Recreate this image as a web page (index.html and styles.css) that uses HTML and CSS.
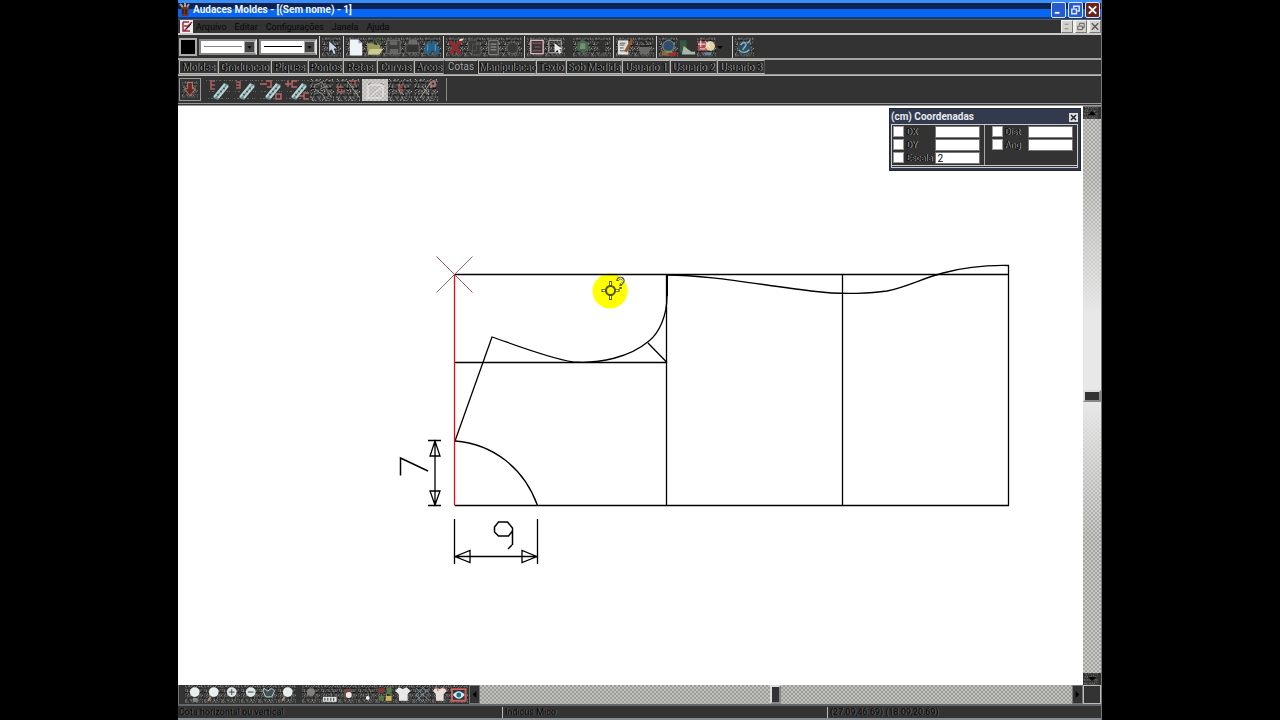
FILE: index.html
```html
<!DOCTYPE html>
<html lang="pt">
<head>
<meta charset="utf-8">
<title>Audaces Moldes - [(Sem nome) - 1]</title>
<link rel="stylesheet" href="styles.css">
</head>
<body>
<svg class="defs" width="0" height="0" aria-hidden="true">
  <symbol id="grain" viewBox="0 0 20 20">
    <path d="M0 1.5H20M-4 4.5H20M-2 7.5H20M-7 10.5H20M-1 13.5H20M-5 16.5H20M-3 19.5H20" stroke="#8d8d8a" stroke-dasharray="1 2 2 1 1 3 1 1"/>
    <path d="M-2 2.5H20M-5 5.5H20M0 9.5H20M-3 12.5H20M-6 15.5H20M-1 18.5H20" stroke="#6d6d6a" stroke-dasharray="2 1 1 3 1 2"/>
    <path d="M-1 .5H20M-6 6.5H20M-3 11.5H20M-8 17.5H20" stroke="#b4b2ae" stroke-dasharray="1 4 1 2 1 5"/>
    <path d="M-3 3.5H20M-1 8.5H20M-5 14.5H20" stroke="#101010" stroke-dasharray="3 2 1 2"/>
  </symbol>
  <symbol id="ruler" viewBox="0 0 26 22">
    <path d="M2 19.500H24M0 1.500H26M3 12.500H26" stroke="#666" stroke-dasharray="1 2 2 3 1 1"/>
    <path d="M7 19 18 4l5 2L12 21z" fill="#6f8d90"/><path d="M8 18 19 5M12 19 22 7" stroke="#b9d4d4" stroke-width="2"/><path d="m11 15 2 1M14 12l2 1M17 9l2 1" stroke="#344"/>
  </symbol>
</svg>
<div class="app">
  <header class="titlebar">
    <svg class="logo" viewBox="0 0 12 14"><path d="M2 4h8l-1 9H3z" fill="#6b3428"/><path d="M1 1l3 3M6 0v4M10 1 8 4" stroke="#b69c89" stroke-width="2"/><path d="M4 6v5M7 6v5" stroke="#27120e"/></svg>
    <h1>Audaces Moldes - [(Sem nome) - 1]</h1>
    <div class="winbtns">
      <button class="wb" aria-label="Minimizar"><svg viewBox="0 0 14 14"><path d="M3 10h5" stroke="#fff" stroke-width="2"/></svg></button>
      <button class="wb" aria-label="Restaurar"><svg viewBox="0 0 14 14"><path d="M5 5V3h6v5H9M3 6h5v5H3z" fill="none" stroke="#dfe8fb" stroke-width="1.5"/></svg></button>
      <button class="wb close" aria-label="Fechar"><svg viewBox="0 0 14 14"><path d="m3 3 8 8m0-8-8 8" stroke="#fff" stroke-width="2"/></svg></button>
    </div>
  </header>
  <nav class="menubar">
    <svg class="docicon" viewBox="0 0 13 13"><path d="M0 0h13v13H0z" fill="#f1eeee"/><path d="M3 2h6M3 2v9h7M4 6h4l4-4M4 11l6-6" fill="none" stroke="#9b2946" stroke-width="1.5"/><path d="m6 9 5-5" stroke="#222"/></svg>
    <button>Arquivo</button><button>Editar</button><button>Configurações</button><button>Janela</button><button>Ajuda</button>
    <div class="mdi">
      <button aria-label="Minimizar documento"><svg viewBox="0 0 11 11"><path d="M3 8h4M3 3h4" stroke="#777"/></svg></button>
      <button aria-label="Restaurar documento"><svg viewBox="0 0 11 11"><path d="M4 4V2h5v5H7M2 5h5v4H2z" fill="none" stroke="#555"/></svg></button>
      <button aria-label="Fechar documento"><svg viewBox="0 0 11 11"><path d="m2 2 7 7m0-7-7 7" stroke="#555" stroke-width="1.5"/></svg></button>
    </div>
  </nav>
  <div class="toolbar">
    <button class="swatch" aria-label="Cor"></button>
    <button class="combo" aria-label="Tipo de linha"><span class="line thin"></span><span class="drop"><svg viewBox="0 0 11 12"><path d="M3 5h5L5.5 8z" fill="#000"/></svg></span></button>
    <button class="combo" aria-label="Espessura"><span class="line"></span><span class="drop"><svg viewBox="0 0 11 12"><path d="M3 5h5L5.5 8z" fill="#000"/></svg></span></button>
    <div class="group">
      <button class="tb" aria-label="Selecionar"><svg viewBox="0 0 20 20"><use href="#grain"/><path d="M7 3v13l3-3 2 5 3-1-2-5h4z" fill="#c9d6e0" stroke="#223"/></svg></button>
    </div>
    <div class="group">
      <button class="tb" aria-label="Novo"><svg viewBox="0 0 20 20"><use href="#grain"/><path d="M4 2h9l4 4v13H4z" fill="#eef3f6"/><path d="M13 2v4h4" fill="#98a8b0"/></svg></button>
      <button class="tb" aria-label="Abrir"><svg viewBox="0 0 20 20"><use href="#grain"/><path d="M2 6h6l2 2h6v3l3 1-4 6H3z" fill="#9c9b5c"/><path d="M5 12h14l-4 6H3z" fill="#c9cb91"/><path d="M10 4c4-3 6 0 7 2" stroke="#315923" fill="none" stroke-width="2"/></svg></button>
      <button class="tb" aria-label="Salvar"><svg viewBox="0 0 20 20"><use href="#grain"/><path d="M3 3h14v14H3z" fill="#3c3c3c" stroke="#777"/><path d="M6 4h8v4H6zM6 12h9v5H6z" fill="#666"/></svg></button>
      <button class="tb" aria-label="Imprimir"><svg viewBox="0 0 20 20"><use href="#grain"/><path d="M3 7h14v9H3z" fill="#343434" stroke="#656565"/><path d="M6 2h9v5H6z" fill="#6c6c6c"/></svg></button>
      <button class="tb" aria-label="Localizar"><svg viewBox="0 0 20 20"><use href="#grain"/><path d="m2 17 2-10 3-3h2l1 3 1-3h2l3 3 3 10-6 1-2-5-3 5z" fill="#286289"/><path d="M6 7v7M14 7v7" stroke="#5aa0c2"/></svg></button>
    </div>
    <div class="group">
      <button class="tb" aria-label="Recortar"><svg viewBox="0 0 20 20"><use href="#grain"/><path d="m4 4 11 13M16 3 4 17" stroke="#8c2b30" stroke-width="4"/><path d="M14 3l4-1" stroke="#ddb" stroke-width="2"/></svg></button>
      <button class="tb" aria-label="Copiar"><svg viewBox="0 0 20 20"><use href="#grain"/><path d="M4 3h8v11H4zM8 7h8v11H8z" fill="#393939" stroke="#555"/></svg></button>
      <button class="tb" aria-label="Colar"><svg viewBox="0 0 20 20"><use href="#grain"/><path d="M5 3h10v15H5z" fill="#444" stroke="#888"/><path d="M7 7h6M7 10h6M7 13h6" stroke="#aaa"/></svg></button>
      <button class="tb" aria-label="Desfazer"><svg viewBox="0 0 20 20"><use href="#grain"/><circle cx="10" cy="11" r="6" fill="#393939" stroke="#666"/></svg></button>
    </div>
    <div class="group">
      <button class="tb" aria-label="Moldura"><svg viewBox="0 0 20 20"><use href="#grain"/><path d="M4 3h13v14H4z" fill="#3a3336" stroke="#d6b7b9" stroke-width="1.5"/><path d="M6 6h9M8 10h6M6 14h9" stroke="#96696e"/></svg></button>
      <button class="tb" aria-label="Janela de seleção"><svg viewBox="0 0 20 20"><use href="#grain"/><path d="M3 3h13v13H3z" fill="none" stroke="#b7b5b5"/><path d="M9 6v10l3-3 2 4 2-1-2-4h3z" fill="#e7edf0"/></svg></button>
      <button class="tb apart" aria-label="Molde"><svg viewBox="0 0 20 20"><use href="#grain"/><path d="M4 12 5 5l5-3 6 4 1 6-6 5z" fill="#46654b"/><path d="M8 6h5v6H7z" fill="#75917a"/></svg></button>
      <button class="tb" aria-label="Peça"><svg viewBox="0 0 20 20"><use href="#grain"/><path d="M7 3h7v6l-3 9-4-7z" fill="#303030"/></svg></button>
    </div>
    <div class="group">
      <button class="tb" aria-label="Propriedades"><svg viewBox="0 0 20 20"><use href="#grain"/><path d="M2 3h11v15H2z" fill="#dde1df"/><path d="M4 8h5M4 11h4M4 14h6M4 6h6" stroke="#555"/><path d="m17 2-7 13" stroke="#91562b" stroke-width="3"/></svg></button>
      <button class="tb" aria-label="Medir"><svg viewBox="0 0 20 20"><use href="#grain"/><circle cx="10" cy="12" r="6" fill="#696969"/><path d="M5 9h10M8 4l4 3" stroke="#262626" stroke-width="2"/></svg></button>
    </div>
    <div class="group">
      <button class="tb" aria-label="Globo"><svg viewBox="0 0 20 20"><use href="#grain"/><circle cx="10" cy="9" r="6" fill="#304e6b" stroke="#6f9496"/><path d="M3 14h7v5H3z" fill="#92643c"/><path d="M10 15h8v4h-8z" fill="#ad2831"/><path d="M7 14h7v2H7z" fill="#64a65a"/></svg></button>
      <button class="tb" aria-label="Enviar"><svg viewBox="0 0 20 20"><path d="M2 3h7v13H2z" fill="#345a3b"/><path d="m6 9 8 6h4v3H4z" fill="#a8b8a9"/></svg></button>
      <button class="tb" aria-label="Paleta"><svg viewBox="0 0 20 20"><use href="#grain"/><path d="M1 4h10v10H1z" fill="#a94b51"/><circle cx="14" cy="9" r="5" fill="#e1d2a2"/><path d="M4 3v7M1 7h8M9 4l5 7m0-7-5 7M3 12h6" stroke="#f7eeee"/><path d="M8 17h7" stroke="#6784a1" stroke-width="3"/></svg></button>
      <svg class="caret" viewBox="0 0 6 6"><path d="M0 2h6L3 5z" fill="#050505"/></svg>
    </div>
    <div class="group">
      <button class="tb" aria-label="Ajuda"><svg viewBox="0 0 20 20"><use href="#grain"/><circle cx="10" cy="11" r="7" fill="#314b5c"/><path d="M6 8c3-5 7-2 5 1l-3 4M4 13c3 4 8 3 11 0M13 6l3-3" fill="none" stroke="#91bac9" stroke-width="1.5"/></svg></button>
    </div>
  </div>
  <div class="tabs" role="tablist">
    <button role="tab">Moldes</button><button role="tab">Graduacao</button><button role="tab">Piques</button><button role="tab">Pontos</button><button role="tab">Retas</button><button role="tab">Curvas</button><button role="tab">Arcos</button><button role="tab" class="active" aria-selected="true">Cotas</button><button role="tab">Manipulacao</button><button role="tab">Texto</button><button role="tab">Sob Medida</button><button role="tab">Usuario 1</button><button role="tab">Usuario 2</button><button role="tab">Usuario 3</button>
  </div>
  <div class="tools">
    <button class="pin" aria-label="Fixar"><svg viewBox="0 0 20 24"><use href="#grain"/><path d="M7 3h6v8h4l-7 9-7-9h4z" fill="#6b2622" stroke="#bd9c91"/></svg></button>
    <div class="toolrow">
      <button class="tool" aria-label="Cota 1"><svg viewBox="0 0 26 22"><use href="#ruler"/><path d="M9 2H5v8h4M5 6h4" fill="none" stroke="#ab6260" stroke-width="1.5"/></svg></button>
      <button class="tool" aria-label="Cota 2"><svg viewBox="0 0 26 22"><use href="#ruler"/><path d="M4 3h4v6H4M4 6h4" fill="none" stroke="#ab6260" stroke-width="1.5"/></svg></button>
      <button class="tool" aria-label="Cota 3"><svg viewBox="0 0 26 22"><use href="#ruler"/><path d="M2 5h7M8 2h5v6H9M18 15h5v5h-5z" fill="none" stroke="#ba6765" stroke-width="1.5"/></svg></button>
      <button class="tool" aria-label="Cota 4"><svg viewBox="0 0 26 22"><use href="#ruler"/><path d="M1 5h6M4 2v6M13 2H8v6h5M15 17h5M25 14h-5v6h5" fill="none" stroke="#ba6765" stroke-width="1.5"/></svg></button>
      <button class="tool" aria-label="Cota 5"><svg viewBox="0 0 26 22"><use href="#grain"/><path d="m5 6 7-3 9 15M5 10l9 7M10 10l7-3" fill="none" stroke="#928b88"/></svg></button>
      <button class="tool" aria-label="Cota 6"><svg viewBox="0 0 26 22"><use href="#grain"/><path d="m11 2 12 16" stroke="#aaa5a0"/><path d="M7 8H2v5h5M14 2h5v4" fill="none" stroke="#ae5a56" stroke-width="1.5"/></svg></button>
      <button class="tool on" aria-label="Cota horizontal ou vertical"><svg viewBox="0 0 26 22"><path d="M6 5v13M6 6h16M21 3v15M9 17 20 8M4 19h16" stroke="#eee"/><path d="m6 6 3-2M22 6l-3-2" stroke="#8f6a67"/></svg></button>
      <button class="tool" aria-label="Cota angular"><svg viewBox="0 0 26 22"><use href="#grain"/><path d="M11 5v7l5 4" stroke="#aaa5a0" fill="none"/><path d="m15 5-4 4 4 4" fill="none" stroke="#9e4c49" stroke-width="2"/></svg></button>
      <button class="tool" aria-label="Cota de raio"><svg viewBox="0 0 26 22"><use href="#grain"/><path d="m6 19 11-16M8 7l7 9" stroke="#aaa5a0"/><path d="M17 9V3h4v4h-4" fill="none" stroke="#b87874" stroke-width="1.5"/></svg></button>
    </div>
  </div>
  <main class="workspace">
    <div class="canvas">
      <svg viewBox="178 106 905 579" fill="none" stroke="#000" stroke-width="1.3">
        <circle cx="610" cy="291" r="17.5" fill="#ff0" stroke="none"/>
        <path d="M455 274.5H1009M455 362.5H667M455 505.5H1009M666.500 274V505.5M842.5 274V505.5M1008.500 265.500V505.5"/>
        <path d="M455 441 492 337 C510 343 548 358 573 362 C600 364 630 357 649 341 C659 333 667 316 667 296V276M648 343l19 19.500"/>
        <path d="M667 275C710 275 760 285 816 291.500C843 295 874 293 887 291C907 287 923 278 943 273C965 267 986 265 1009 265.500"/>
        <path d="M667 275v21" stroke-width="2"/>
        <path d="M455 441C493 444 524 468 537.500 505.500"/>
        <path d="M454.500 274V505.500" stroke="#e10c12"/>
        <path d="m436.500 256.500 36 36" stroke="#965057" stroke-width="1"/><path d="m472.500 256.500-36 36" stroke="#806970" stroke-width="1"/>
        <path d="M428 440.500h13M428 505.500h13M435 441v64M435 441l-5 15h10zM435 505l-5-14h10zM454.500 519v45M537.500 519v45M455 556.500h82M455 556.500l15-6v12zM537 556.500l-15-6v12z"/>
        <path d="M400.500 475.500V458L428 471M512 545l-4 4M512.500 545v-17l-5-6h-9l-4 5v5l4 4h10l4-5" stroke-width="1.5"/>
        <g stroke="#55550c"><path d="M610.500 281v19M601.500 290.500h18" stroke-width="3"/><path d="M610.500 282v3M610.500 296v3M602.500 290.500h3M615.500 290.500h3" stroke="#ffffb0"/><circle cx="610.500" cy="290.500" r="4.500" fill="#ff0" stroke-width="2"/></g>
        <path d="M617.500 281c0-4 6-4 6 0 0 2-3 2-3 5M620.500 287v2" stroke="#66662f" stroke-width="2.500"/><path d="M618 280c1-3 5-2 5 1l-2 3" stroke="#ffffd9" stroke-width="1"/>
      </svg>
      <section class="panel">
        <div class="phead"><h2>(cm) Coordenadas</h2><button aria-label="Fechar painel"><svg viewBox="0 0 9 9"><path d="m2 2 5 5m0-5-5 5" stroke="#222" stroke-width="1.500"/></svg></button></div>
        <div class="pbody">
          <div class="fields">
            <input type="checkbox" id="c1"><label for="c1">DX</label><input type="text" aria-label="DX">
            <input type="checkbox" id="c2"><label for="c2">DY</label><input type="text" aria-label="DY">
            <input type="checkbox" id="c3"><label for="c3">Escala</label><input type="text" aria-label="Escala" value="2">
          </div>
          <div class="fields right">
            <input type="checkbox" id="c4"><label for="c4">Dist</label><input type="text" aria-label="Dist">
            <input type="checkbox" id="c5"><label for="c5">Ang</label><input type="text" aria-label="Ang">
          </div>
        </div>
      </section>
    </div>
    <div class="vscroll">
      <button aria-label="Para cima"><svg viewBox="0 0 18 12"><use href="#grain"/><path d="M5 8h8L9 4z" fill="#000"/></svg></button>
      <div class="track upper"></div><div class="thumb"></div><div class="track lower"></div>
      <button aria-label="Para baixo"><svg viewBox="0 0 18 12"><use href="#grain"/><path d="M5 4h8L9 8z" fill="#000"/></svg></button>
    </div>
  </main>
  <div class="bottom">
    <div class="views">
      <button aria-label="Zoom"><svg viewBox="0 0 19 18"><use href="#grain"/><circle cx="10" cy="7" r="5" fill="#e9efef"/><path d="M8 13h5v4H8z" fill="#888"/></svg></button>
      <button aria-label="Zoom janela"><svg viewBox="0 0 19 18"><use href="#grain"/><circle cx="10" cy="7" r="5" fill="#e9efef"/><path d="m7 12-3 4" stroke="#a98c77" stroke-width="2"/></svg></button>
      <button aria-label="Mais zoom"><svg viewBox="0 0 19 18"><use href="#grain"/><circle cx="10" cy="7" r="5" fill="#dfe8e8"/><path d="M7 7h6M10 4v6" stroke="#444"/></svg></button>
      <button aria-label="Menos zoom"><svg viewBox="0 0 19 18"><use href="#grain"/><circle cx="10" cy="7" r="5" fill="#dfe8e8"/><path d="M7 7h6" stroke="#444"/></svg></button>
      <button aria-label="Zoom molde"><svg viewBox="0 0 19 18"><use href="#grain"/><path d="M5 3l4 3 4-3 3 3-3 6H7L4 6z" fill="#435256" stroke="#c5d1d1"/></svg></button>
      <button aria-label="Zoom total"><svg viewBox="0 0 19 18"><use href="#grain"/><circle cx="10" cy="7" r="5" fill="#e9efef"/><path d="m7 12-3 4" stroke="#a98c77" stroke-width="2"/></svg></button>
      <button class="gapl" aria-label="Mover"><svg viewBox="0 0 19 18"><use href="#grain"/><circle cx="9" cy="7" r="4" fill="#858080"/></svg></button>
      <button aria-label="Régua"><svg viewBox="0 0 19 18"><use href="#grain"/><path d="M2 12h14v5H2z" fill="#dfe6e6"/><path d="M4 13v3M7 13v3M10 13v3M13 13v3" stroke="#333"/></svg></button>
      <button aria-label="Cores"><svg viewBox="0 0 19 18"><use href="#grain"/><path d="M5 4h8v9H5z" fill="#714a43"/><circle cx="10" cy="10" r="3" fill="#eee"/></svg></button>
      <button aria-label="Ponto"><svg viewBox="0 0 19 18"><use href="#grain"/><circle cx="10" cy="13" r="2" fill="#eee"/></svg></button>
      <button aria-label="Moldes"><svg viewBox="0 0 19 18"><use href="#grain"/><path d="M2 3h6v5H2z" fill="#803933"/><path d="M11 2h5v7h-5zM3 11h5v5H3z" fill="#547944"/><path d="M10 11h6v5h-6z" fill="#d0b34c"/></svg></button>
      <button aria-label="Camisa"><svg viewBox="0 0 19 18"><use href="#grain"/><path d="m4 2 4 2 4-2 4 4-3 3v7H4V9L0 6z" fill="#e7e9e8"/></svg></button>
      <button aria-label="Grade"><svg viewBox="0 0 19 18"><use href="#grain"/><path d="m3 3 14 13M3 10l7 7M10 2l7 7M3 10l8-8M3 16 17 3" stroke="#79919b"/></svg></button>
      <button aria-label="Camisa marcada"><svg viewBox="0 0 19 18"><use href="#grain"/><path d="m4 2 4 2 4-2 3 4-3 3v7H4V9L1 6z" fill="#e5dedb"/><path d="M2 3h4v3M11 3h4v3" stroke="#b35e51" fill="none"/></svg></button>
      <button aria-label="Visualizar"><svg viewBox="0 0 19 18"><use href="#grain"/><path d="M2 4h14v12H2z" fill="#283943" stroke="#ce6058" stroke-width="2"/><path d="M3 10c4-5 8-5 12 0-4 5-8 5-12 0z" fill="#d4edf2"/><circle cx="9" cy="10" r="2.500" fill="#286989"/></svg></button>
    </div>
    <div class="hscroll">
      <button aria-label="Para a esquerda"><svg viewBox="0 0 10 16"><path d="M7 4v8L3 8z" fill="#000"/></svg></button>
      <div class="track hleft"></div><div class="thumb"></div><div class="track hright"></div>
      <button aria-label="Para a direita"><svg viewBox="0 0 10 16"><path d="M3 4v8l4-4z" fill="#000"/></svg></button>
    </div>
    <div class="corner"></div>
  </div>
  <footer class="status"><span>Cota horizontal ou vertical</span><span>Indicus Mico</span><span>(27.09,46.69) (18.09,20.69)</span></footer>
</div>
</body>
</html>
```
FILE: styles.css
```css
* { box-sizing: border-box; }
body { margin: 0; padding: 0 178px; background: #000; font: 9px/12px Roboto, "Liberation Sans", sans-serif; }
button { margin: 0; padding: 0; border: 0; background: none; font: inherit; color: inherit; flex-shrink: 0; }
svg { display: block; }
button svg { width: 100%; height: 100%; }
h1, h2 { margin: 0; }
.defs { position: absolute; }
.app { display: flex; flex-direction: column; height: 100vh; background: #333; overflow: hidden; border-right: 1px solid #777; }

.titlebar { display: flex; align-items: center; height: 19px; flex-shrink: 0; padding: 0 1px; background: linear-gradient(#3b8cf5 0 3px, #0c2351 3px 9px, #0866f5 9px 17px, #123b78 17px); }
.logo { width: 12px; height: 14px; }
h1 { flex: 1; padding-left: 2px; font: bold 10px/18px Roboto, "Liberation Sans", sans-serif; color: #f1f5fb; }
.winbtns { display: flex; gap: 2px; }
.wb { width: 15px; height: 16px; border: 1px solid #dce7f5; border-radius: 2px; background: #265bd0; }
.wb.close { background: #6b221b; }

.menubar { display: flex; align-items: center; gap: 8px; height: 14px; flex-shrink: 0; padding-left: 2px; border-top: 1px solid #585858; color: #080808; text-shadow: 1px 0 #888; }
.docicon { width: 13px; height: 13px; margin-right: -5px; }
.mdi { display: flex; gap: 2px; margin-left: auto; background: #eee; }
.mdi button { width: 12px; height: 13px; background: #d4d2cd; border: 1px solid #f4f4f4; border-right-color: #777; border-bottom-color: #777; }

.toolbar { display: flex; align-items: center; height: 27px; flex-shrink: 0; gap: 2px; padding-left: 1px; border-top: 2px solid #c9c9c6; border-bottom: 2px solid #a5a5a2; }
.swatch { width: 18px; height: 18px; background: #000; border: 2px solid #aaa; }
.combo { display: flex; align-items: center; width: 58px; height: 16px; background: #fff; border: 2px solid #888; border-right-color: #ddd; }
.line { flex: 1; margin: 0 2px 0 3px; border-top: 1px solid #000; }
.line.thin { border-color: #888; }
.drop { width: 11px; height: 12px; background: #454545; border: 1px solid #aaa; }
.group { display: flex; align-items: center; height: 22px; padding-left: 2px; border-left: 1px solid #ccc; }
.tb { width: 19px; height: 20px; }
.apart { margin-left: 8px; }
.gapl { margin-left: 6px; }
.caret { width: 6px; height: 6px; margin: 0 7px 0 1px; }

.tabs { display: grid; grid-template-columns: 39px 53px 37px 35px 34px 37px 30px 34px 58px 30px 56px 48px 47px 48px; height: 15px; flex-shrink: 0; padding-left: 1px; border-bottom: 1px solid #999; }
.tabs button { padding: 1px 0 0; border: 1px solid #b6b6b3; border-right-color: #555; font-size: 10px; line-height: 10px; white-space: nowrap; color: #080808; text-shadow: 1px 0 #aaa; }
.tabs .active { border-color: #b6b6b3 #222 #333; padding: 0; color: #a5a5a5; text-shadow: 1px 0 #111; }

.tools { display: flex; height: 31px; flex-shrink: 0; padding: 2px 1px; border-top: 1px solid #bbb; border-bottom: 3px double #999; }
.pin { width: 22px; padding: 1px; border: 1px solid #999; }
.toolrow { display: flex; align-items: center; padding: 0 6px 0 5px; border-right: 1px solid #888; }
.tool { width: 26px; height: 22px; }
.tool.on { background: repeating-conic-gradient(#b9b7b4 0 25%, #d0cecb 0 50%) 0 0 / 4px 4px; }

.workspace { display: flex; flex: 1; min-height: 0; }
.canvas { flex: 1; position: relative; min-width: 0; background: #fff; }
.canvas > svg { width: 100%; height: 100%; }
.panel { position: absolute; top: 2px; right: 2px; width: 192px; padding: 1px 2px 2px 1px; background: #343a4d; border: 1px solid #23293b; }
.phead { display: flex; align-items: center; justify-content: space-between; height: 14px; }
h2 { font: bold 10px/14px Roboto, "Liberation Sans", sans-serif; color: #e6eaf2; }
.phead button { width: 9px; height: 9px; background: #ddd; }
.pbody { display: grid; grid-template-columns: 1fr 1fr; border: 1px solid #ccc; border-bottom: 3px double #ccc; background: #333; }
.fields { display: grid; grid-template-columns: 11px 1fr 45px; grid-auto-rows: 13px; align-content: start; column-gap: 2px; padding: 1px 4px 0 1px; color: #080808; border-right: 1px solid #aaa; text-shadow: 1px 0 #aaa; }
.fields.right { padding-left: 7px; border: 0; }
.fields input { margin: 0; border: 1px solid #777; background: #fff; height: 12px; }
.fields input[type=text] { width: 100%; min-width: 0; padding: 0 2px; font: 10px/10px Roboto, "Liberation Sans", sans-serif; }
.fields input[type=checkbox] { appearance: none; width: 11px; height: 11px; border: 1px solid #999; }

.track { background: repeating-conic-gradient(#9c9c99 0 25%, #c0c0bd 0 50%) 0 0 / 4px 4px; }
.vscroll { display: flex; flex-direction: column; width: 18px; flex-shrink: 0; border-top: 1px solid #777; }
.vscroll button { height: 12px; background: #333; }
.vscroll .thumb { height: 12px; }
.thumb { flex-shrink: 0; background: #333; border: 2px solid #888; border-left-color: #ddd; border-top-color: #ddd; }
.upper { flex: 27; background: linear-gradient(#ddd0 20%, #e8e8e8 72%), repeating-conic-gradient(#a4a4a1 0 25%, #c8c8c5 0 50%) 0 0 / 4px 4px; }
.lower { flex: 27; background: linear-gradient(#e8e8e8 0, #ddd0 50%), repeating-conic-gradient(#a4a4a1 0 25%, #c8c8c5 0 50%) 0 0 / 4px 4px; }

.bottom { display: flex; height: 19px; flex-shrink: 0; }
.views { display: flex; padding-left: 6px; border-left: 1px solid #777; width: 291px; flex-shrink: 0; }
.views button { flex: 1 1 0; height: 18px; }
.hscroll { display: flex; flex: 1; min-width: 0; }
.hscroll button { width: 11px; background: #333; border: 1px solid #777; }
.hscroll .thumb { width: 11px; }
.hleft { flex: 290 1 0; }
.hright { flex: 291 1 0; }
.corner { width: 18px; background: #333; border: 1px solid #bbb; }

.status { display: grid; grid-template-columns: 324px 325px 1fr; height: 16px; flex-shrink: 0; padding-top: 1px; border-top: 2px solid #666; border-bottom: 2px solid #858b92; color: #050505; text-shadow: 1px 0 #666; line-height: 11px; }
.status span { padding-left: 2px; border-left: 1px solid #bbb; }
.status span:first-child { border: 0; padding-left: 1px; }
```
